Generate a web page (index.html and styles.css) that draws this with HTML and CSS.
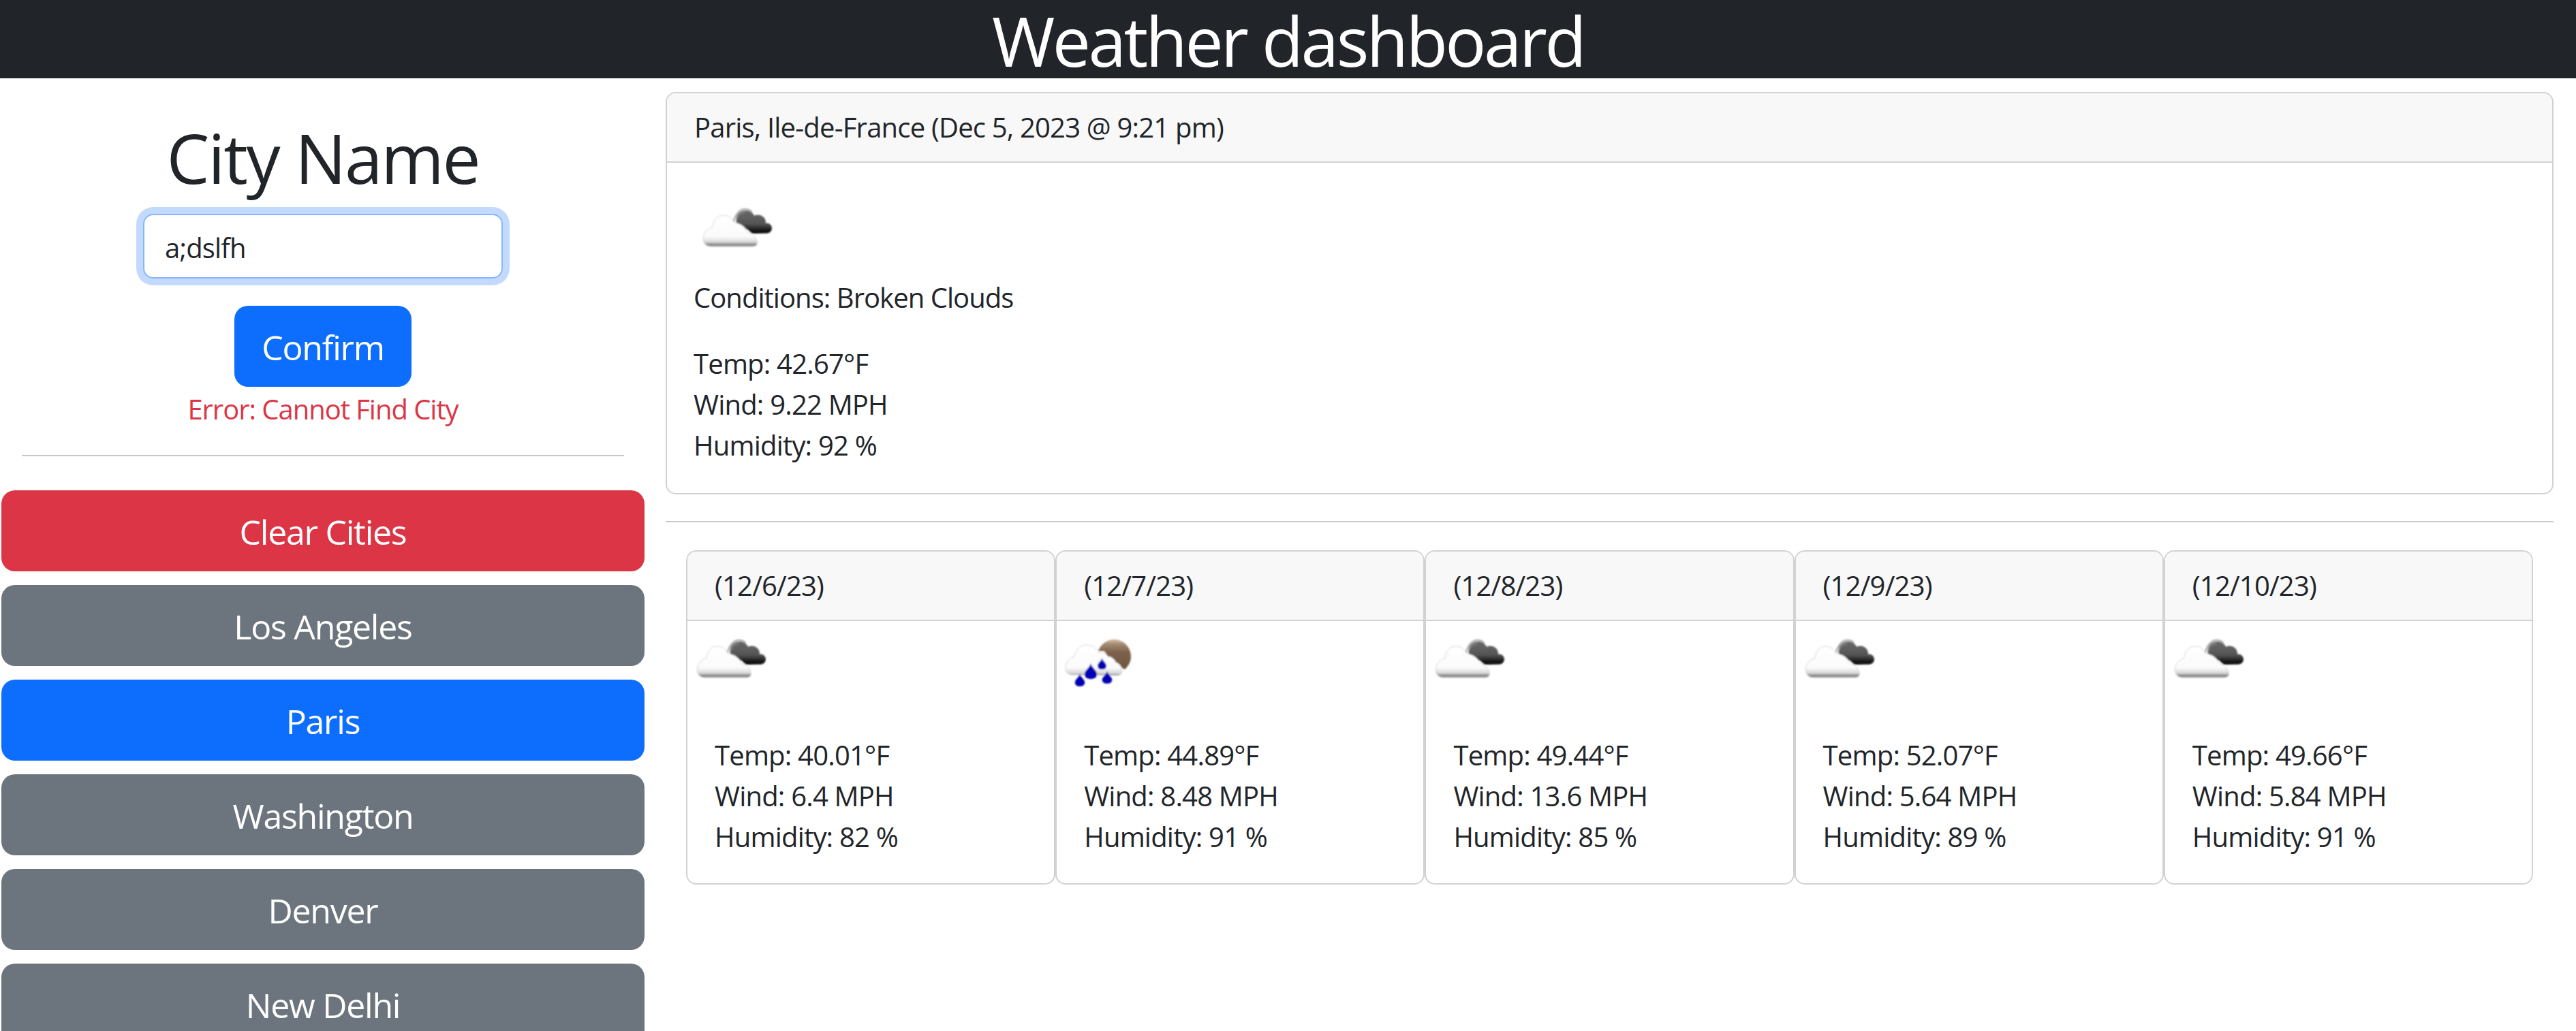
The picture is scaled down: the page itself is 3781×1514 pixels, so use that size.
FILE: index.html
```html
<!DOCTYPE html>
<html lang="en">
<head>
    <meta charset="UTF-8">
    <meta name="viewport" content="width=device-width, initial-scale=1.0">
    <title>Weather dashboard</title>
    <link rel="stylesheet" href="styles.css">
</head>
<body>
    <svg class="sprite" xmlns="http://www.w3.org/2000/svg">
        <defs>
            <linearGradient id="whiteFill" gradientUnits="userSpaceOnUse" x1="0" y1="36" x2="0" y2="84">
                <stop offset="0" stop-color="#ffffff"/>
                <stop offset="0.68" stop-color="#fbfbfb"/>
                <stop offset="0.84" stop-color="#d8d8d8"/>
                <stop offset="0.93" stop-color="#808080"/>
                <stop offset="1" stop-color="#a8a8a8"/>
            </linearGradient>
            <linearGradient id="darkFill" gradientUnits="userSpaceOnUse" x1="0" y1="28" x2="0" y2="64">
                <stop offset="0" stop-color="#6a6a6a"/>
                <stop offset="0.6" stop-color="#555555"/>
                <stop offset="0.85" stop-color="#1c1c1c"/>
                <stop offset="1" stop-color="#000000"/>
            </linearGradient>
            <linearGradient id="moonFill" gradientUnits="userSpaceOnUse" x1="0" y1="26" x2="0" y2="70">
                <stop offset="0" stop-color="#d9c6b4"/>
                <stop offset="0.18" stop-color="#a58a72"/>
                <stop offset="0.45" stop-color="#7c614b"/>
                <stop offset="1" stop-color="#6f5540"/>
            </linearGradient>
            <filter id="soft" x="-10%" y="-10%" width="120%" height="120%">
                <feGaussianBlur stdDeviation="0.9"/>
            </filter>
            <path id="drop" d="M0 -12 C1 -6 9 -2 9 4 C9 9 5 11 0 11 C-5 11 -9 9 -9 4 C-9 -2 -1 -6 0 -12Z" fill="#0000b4"/>
            <symbol id="brokenClouds" viewBox="0 0 125 125">
                <g filter="url(#soft)" transform="translate(1.5 0)">
                    <g fill="url(#darkFill)">
                        <circle cx="75" cy="44" r="14"/>
                        <circle cx="93" cy="48" r="11.5"/>
                        <circle cx="106" cy="56" r="7.5"/>
                        <path d="M70 50 L104 52 L106 63.5 L84 64Z"/>
                    </g>
                    <path d="M57 47 C60 35 67 28 74 28 C78 28 82 30 84 32" fill="none" stroke="#a0a0a0" stroke-width="2"/>
                    <path d="M61 46 C63 38 68 33 74 33" fill="none" stroke="#8a8a8a" stroke-width="1.5"/>
                    <path d="M23 83 C15 82 12 76 13 69 C14 61 20 56 26 55 C27 45 33 37 42 37 C50 37 55 41 58 48 C68 49 75 55 78 62 C85 63 91 70 92 77 C92 81 89 83 85 83Z" fill="url(#whiteFill)" stroke="#d4d4d4" stroke-width="1"/>
                </g>
            </symbol>
            <symbol id="rainMoon" viewBox="0 0 125 125">
                <g filter="url(#soft)">
                    <path d="M61 44 C65 33 75 26 86 27 C100 28 109 40 109 52 C109 60 105 66 100 71 L80 60 L70 44Z" fill="url(#moonFill)"/>
                    <path d="M23 79 C15 79 12 74 13 67 C14 59 20 53 26 52 C28 42 35 35 44 35 C52 35 58 39 62 47 C66 45 72 47 75 52 C80 52 85 56 87 61 C92 62 96 68 96 73 C96 78 92 80 88 80Z" fill="url(#whiteFill)" stroke="#d4d4d4" stroke-width="1"/>
                    <use href="#drop" transform="translate(50 74)"/>
                    <use href="#drop" transform="translate(66.5 63) scale(0.72)"/>
                    <use href="#drop" transform="translate(74 83) scale(0.8)"/>
                    <use href="#drop" transform="translate(34 87) scale(0.8)"/>
                </g>
            </symbol>
        </defs>
    </svg>

    <header class="top-bar">
        <h1>Weather dashboard</h1>
    </header>

    <div class="layout">
        <aside class="sidebar">
            <form class="city-form">
                <h1>City Name</h1>
                <input class="city-input" type="text" value="a;dslfh">
                <button type="button" class="btn btn-primary btn-confirm">Confirm</button>
                <div class="error">Error: Cannot Find City</div>
            </form>
            <hr class="side-rule">
            <div class="city-list">
                <button type="button" class="btn btn-danger">Clear Cities</button>
                <button type="button" class="btn btn-secondary">Los Angeles</button>
                <button type="button" class="btn btn-primary">Paris</button>
                <button type="button" class="btn btn-secondary">Washington</button>
                <button type="button" class="btn btn-secondary">Denver</button>
                <button type="button" class="btn btn-secondary">New Delhi</button>
            </div>
        </aside>

        <main class="main">
            <section class="card current">
                <div class="card-header">Paris, Ile-de-France (Dec 5, 2023 @ 9:21 pm)</div>
                <div class="card-body">
                    <svg class="icon"><use href="#brokenClouds"/></svg>
                    <p class="conditions">Conditions: Broken Clouds</p>
                    <div>Temp: 42.67°F</div>
                    <div>Wind: 9.22 MPH</div>
                    <div>Humidity: 92 %</div>
                </div>
            </section>

            <hr class="main-rule">

            <div class="forecast">
                <section class="card">
                    <div class="card-header">(12/6/23)</div>
                    <svg class="icon"><use href="#brokenClouds"/></svg>
                    <div class="stats">
                        <div>Temp: 40.01°F</div>
                        <div>Wind: 6.4 MPH</div>
                        <div>Humidity: 82 %</div>
                    </div>
                </section>
                <section class="card">
                    <div class="card-header">(12/7/23)</div>
                    <svg class="icon"><use href="#rainMoon"/></svg>
                    <div class="stats">
                        <div>Temp: 44.89°F</div>
                        <div>Wind: 8.48 MPH</div>
                        <div>Humidity: 91 %</div>
                    </div>
                </section>
                <section class="card">
                    <div class="card-header">(12/8/23)</div>
                    <svg class="icon"><use href="#brokenClouds"/></svg>
                    <div class="stats">
                        <div>Temp: 49.44°F</div>
                        <div>Wind: 13.6 MPH</div>
                        <div>Humidity: 85 %</div>
                    </div>
                </section>
                <section class="card">
                    <div class="card-header">(12/9/23)</div>
                    <svg class="icon"><use href="#brokenClouds"/></svg>
                    <div class="stats">
                        <div>Temp: 52.07°F</div>
                        <div>Wind: 5.64 MPH</div>
                        <div>Humidity: 89 %</div>
                    </div>
                </section>
                <section class="card">
                    <div class="card-header">(12/10/23)</div>
                    <svg class="icon"><use href="#brokenClouds"/></svg>
                    <div class="stats">
                        <div>Temp: 49.66°F</div>
                        <div>Wind: 5.84 MPH</div>
                        <div>Humidity: 91 %</div>
                    </div>
                </section>
            </div>
        </main>
    </div>
</body>
</html>
```

FILE: styles.css
```css
html, body {
    height: 1514px;
    overflow: hidden;
}
body {
    margin: 0;
    font-family: "Open Sans", "Noto Sans", sans-serif;
    font-size: 40px;
    line-height: 60px;
    letter-spacing: -0.02em;
    color: #212529;
    background-color: #fff;
}
.sprite {
    display: block;
    width: 0;
    height: 0;
}
h1 {
    margin: 0;
    font-size: 100px;
    font-weight: 400;
    line-height: 120px;
    letter-spacing: -0.023em;
}
.top-bar {
    height: 115px;
    background-color: #212529;
    color: #fff;
    text-align: center;
}
.top-bar h1 {
    line-height: 118px;
    letter-spacing: -0.035em;
}
.layout {
    display: flex;
}
.sidebar {
    width: 948px;
    flex: none;
    padding: 0 2px;
    box-sizing: border-box;
}
.city-form {
    display: flex;
    flex-direction: column;
    align-items: center;
    padding-top: 56px;
}
.city-input {
    box-sizing: border-box;
    width: 528px;
    height: 95px;
    margin-top: 23px;
    padding: 3px 30px 0;
    font: inherit;
    letter-spacing: inherit;
    color: #212529;
    border: 2px solid #86b7fe;
    border-radius: 15px;
    box-shadow: 0 0 0 10px #c3dafe;
    outline: none;
}
.btn {
    box-sizing: border-box;
    height: 119px;
    padding: 2px 40px 0;
    font-family: inherit;
    font-size: 50px;
    letter-spacing: -0.025em;
    color: #fff;
    border: none;
    border-radius: 20px;
}
.btn-primary {
    background-color: #0d6efd;
}
.btn-secondary {
    background-color: #6c757d;
}
.btn-danger {
    background-color: #dc3545;
}
.btn-confirm {
    margin-top: 40px;
}
.error {
    margin-top: 3px;
    color: #dc3545;
    letter-spacing: -0.026em;
}
.side-rule {
    margin: 37px 30px 50px;
    border: 0;
    border-top: 2px solid #c7c8c9;
}
.city-list {
    display: flex;
    flex-direction: column;
    gap: 20px;
}
.main {
    flex: 1;
    min-width: 0;
    padding: 20px 33px 0 29px;
}
.card {
    display: flex;
    flex-direction: column;
    border: 2px solid #d2d2d2;
    border-radius: 15px;
    background-color: #fff;
    overflow: hidden;
}
.card-header {
    height: 102px;
    padding: 20px 40px;
    box-sizing: border-box;
    background-color: #f8f8f8;
    border-bottom: 2px solid #d2d2d2;
}
.card-body {
    padding: 40px 39px 40px;
}
.conditions {
    margin: 3px 0 37px;
    letter-spacing: -0.024em;
}
.icon {
    display: block;
    width: 125px;
    height: 125px;
    flex: none;
}
.main-rule {
    margin: 39px 0 41px;
    border: 0;
    border-top: 2px solid #c7c8c9;
}
.forecast {
    display: flex;
    padding: 0 30px;
}
.forecast .card {
    flex: 1;
    min-width: 0;
}
.stats {
    padding: 42px 40px 38px;
}
```
